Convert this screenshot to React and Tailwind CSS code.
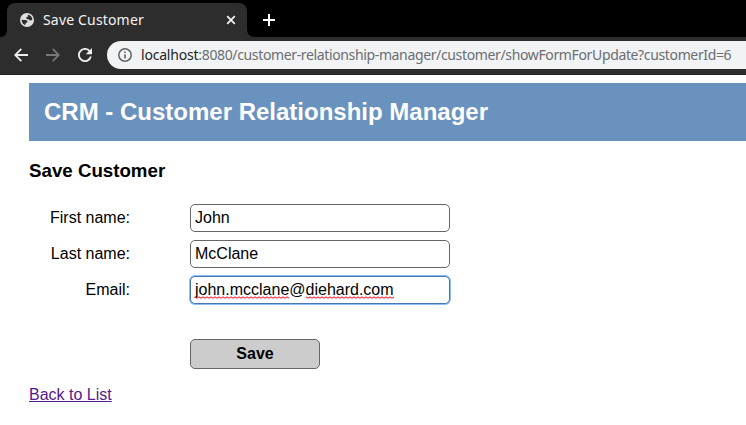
import React from "react";

function TabStrip() {
  return (
    <div className="flex h-[37px] items-end bg-black">
      <svg width="7" height="8" viewBox="0 0 7 8" className="shrink-0">
        <path d="M7 0v8H0C5 8 7 5 7 0Z" fill="#2d2d2d" />
      </svg>
      <div className="flex h-[34px] w-[240px] items-center rounded-t-[8px] bg-[#2d2d2d] pl-[13px] pr-[11px]">
        <svg width="14" height="14" viewBox="0 0 14 14" className="shrink-0">
          <circle cx="7" cy="7" r="7" fill="#dedede" />
          <path
            d="M7.8 1.8 9.8 2.2 11.8 4.2 12.3 6.5 11 7.4 9.4 7.2 8.7 6.2H7.2L6.2 5.2 6.5 4.2 8 3.6Z M1.7 6.4 3.4 7 6 7.1 7.4 8 7.2 9.4 5.8 9.9 5.4 11.4 4.6 12 2.6 10.2 1.8 8.3Z"
            fill="#2d2d2d"
          />
        </svg>
        <span className="ml-[9px] w-[103px] whitespace-nowrap font-['Noto_Sans',sans-serif] text-[14px] leading-5 tracking-[0.17px] text-[#f4f4f4]">
          Save Customer
        </span>
        <svg width="10" height="10" viewBox="0 0 10 10" className="ml-auto">
          <path d="m1.2 1.2 7.6 7.6M8.8 1.2 1.2 8.8" stroke="#f1f1f1" strokeWidth="1.8" />
        </svg>
      </div>
      <svg width="8" height="8" viewBox="0 0 8 8" className="shrink-0">
        <path d="M0 0v8h8C3 8 0 5 0 0Z" fill="#2d2d2d" />
      </svg>
      <svg width="12" height="12" viewBox="0 0 12 12" className="mb-[11px] ml-[8px]">
        <path d="M6 0v12M0 6h12" stroke="#fff" strokeWidth="2" />
      </svg>
    </div>
  );
}

function Toolbar() {
  return (
    <div className="flex h-[38px] items-start border-b border-[#1d1d1d] bg-[#2d2d2d] pl-[14px] pt-[4px]">
      <div className="flex h-[28px] w-[93px] shrink-0 items-center gap-[18px]">
        <svg width="14" height="14" viewBox="0 0 14 14">
          <path d="M14 7H1.5M7.3.8 1.2 7l6.1 6.2" fill="none" stroke="#eee" strokeWidth="1.8" />
        </svg>
        <svg width="14" height="14" viewBox="0 0 14 14">
          <path d="M0 7h12.5M6.7.8 12.8 7l-6.1 6.2" fill="none" stroke="#777" strokeWidth="1.8" />
        </svg>
        <svg width="14" height="14" viewBox="0 0 14 14">
          <path d="M11.8 3.2A6.1 6.1 0 1 0 12.9 8.6" fill="none" stroke="#eee" strokeWidth="1.8" />
          <path d="M14 0v6.2H7.8Z" fill="#eee" />
        </svg>
      </div>
      <div className="flex h-[28px] flex-1 items-center overflow-hidden rounded-l-full bg-[#f1f3f4] pl-[11px]">
        <svg width="14" height="14" viewBox="0 0 14 14" className="shrink-0">
          <circle cx="7" cy="7" r="6.2" fill="none" stroke="#5f6368" strokeWidth="1.5" />
          <path d="M7 6.2v4.4M7 3.4v1.7" stroke="#5f6368" strokeWidth="1.6" />
        </svg>
        <span className="ml-[9px] whitespace-nowrap font-['Noto_Sans',sans-serif] text-[14px] leading-5 tracking-[-0.36px] text-[#6b6e72]">
          <span className="tracking-[-0.2px] text-[#222427]">localhost</span>
          :8080/customer-relationship-manager/customer/showFormForUpdate?customerId=6
        </span>
      </div>
    </div>
  );
}

const fieldClass =
  "h-[28px] w-[260px] rounded-[5px] border border-[#666] bg-white px-[4px] text-[16px] leading-[26px] text-black outline-none";

function Field({ label, children }) {
  return (
    <div className="flex h-[28px] items-center">
      <label className="w-[101px] text-right">{label}</label>
      <div className="ml-[60px] flex">{children}</div>
    </div>
  );
}

function Misspelled({ id, children }) {
  return (
    <span className="relative inline-block">
      {children}
      <svg className="absolute bottom-[4px] left-0 h-[3px] w-full">
        <defs>
          <pattern id={id} width="4" height="3" patternUnits="userSpaceOnUse">
            <path d="M-1 .5 0 1 2 2.3 4 1 5 .5" transform="translate(0 -.1)" fill="none" stroke="#f0283c" strokeWidth="1.1" />
          </pattern>
        </defs>
        <rect width="100%" height="3" fill={`url(#${id})`} />
      </svg>
    </span>
  );
}

export default function App() {
  return (
    <div className="h-[425px] w-[746px] overflow-hidden bg-white">
      <TabStrip />
      <Toolbar />
      <main className="pl-[29px] pt-[8px] font-['Liberation_Sans',Arial,sans-serif] text-[16px] leading-[18px] text-black">
        <header className="flex h-[58px] items-center bg-[#6a92bf] pl-[15px]">
          <h2 className="text-[24px] font-bold leading-7 text-white">CRM - Customer Relationship Manager</h2>
        </header>
        <h3 className="mt-[19px] text-[18.72px] font-bold leading-[22px]">Save Customer</h3>
        <form className="mt-[22px]">
          <div className="flex flex-col gap-[8px]">
            <Field label="First name:">
              <input className={fieldClass} defaultValue="John" />
            </Field>
            <Field label="Last name:">
              <input className={fieldClass} defaultValue="McClane" />
            </Field>
            <Field label="Email:">
              <div className="h-[28px] w-[260px] rounded-[5px] border border-[#4779b0] bg-white px-[4px] leading-[26px] ring-1 ring-[#8bbdf5]">
                <Misspelled id="squiggle-user">john.mcclane</Misspelled>@<Misspelled id="squiggle-host">diehard.com</Misspelled>
              </div>
            </Field>
          </div>
          <button
            type="button"
            className="ml-[161px] mt-[35px] block h-[30px] w-[130px] rounded-[5px] border border-[#666] bg-[#ccc] font-bold"
          >
            Save
          </button>
        </form>
        <p className="mt-[17px]">
          <a className="text-[#551a8b] underline">Back to List</a>
        </p>
      </main>
    </div>
  );
}
